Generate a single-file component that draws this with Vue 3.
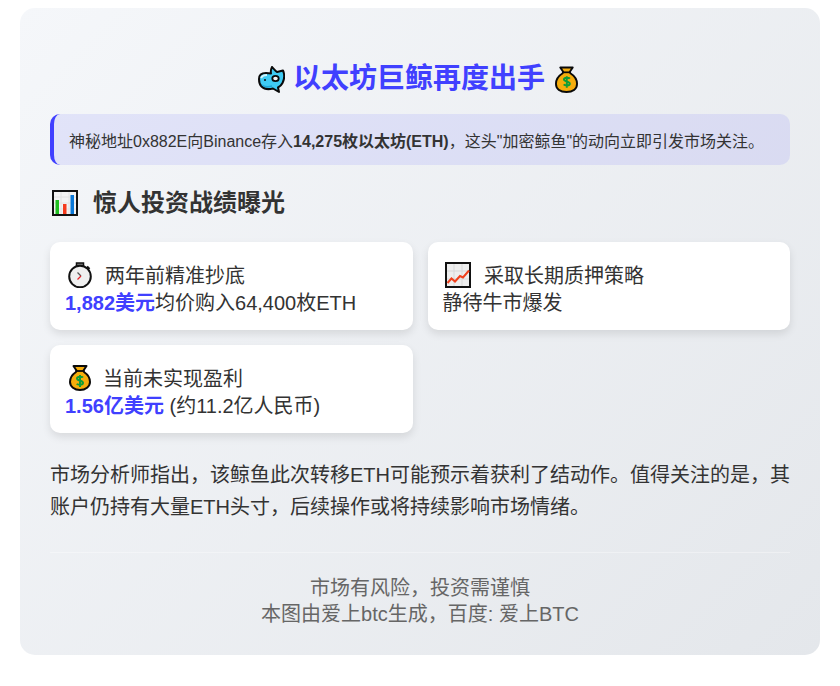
<script setup>
</script>

<template>
  <main class="page">
    <article class="panel">
      <h1 class="title">
        <svg class="whale" viewBox="0 0 27 27" aria-hidden="true">
          <path d="M1 13C1 9 4 7 8 7l5 .5C12.500 5 13 3 14 1c2 2 3.500 4 5 5 2-.5 4-1 6-1.500 1.500 3.500 1.500 8.500-.5 12.500-1 2-2.500 3.500-4.500 4.500l1 4.500-6-3.500c-4 1-9 .5-11.500-2C1.500 18.500 1 16 1 13z" fill="#3fcbf3" stroke="#0a0a0a" stroke-width="2" stroke-linejoin="round"/>
          <path d="M3 12c1-2 3-3 6-3" fill="none" stroke="#d3f5fd" stroke-width="2"/>
          <path d="M4 19c3 2 7 2 10 1" fill="none" stroke="#1fa6d6" stroke-width="1.500"/>
          <ellipse cx="17.500" cy="12.500" rx="3.200" ry="2.700" fill="#f6f6f6" stroke="#0a0a0a" stroke-width="1.800"/>
          <circle cx="7" cy="14" r="1" fill="#0a0a0a"/>
        </svg>
        <span>以太坊巨鲸再度出手</span>
        <svg class="bag" viewBox="0 0 24 28" aria-hidden="true">
          <path d="M5.500 1.500h13l-3 4.500 .5 1.500c4 2.500 7 6.500 7 11 0 5.500-4.500 8.500-11 8.500S1 24 1 18.500c0-4.500 3-8.500 7-11L8.500 6z" fill="#f6ad0c" stroke="#0a0a0a" stroke-width="2" stroke-linejoin="round"/>
          <path d="M7.500 6.500h9" stroke="#0a0a0a" stroke-width="1.800"/>
          <path d="M15.500 13c-.8-1-6-1.500-6.200.8-.2 2.700 6.400 1.800 6.200 4.700-.2 2.400-5.300 2-6.400.7M12.300 10.500v12" fill="none" stroke="#0f9d38" stroke-width="2"/>
        </svg>
      </h1>

      <p class="alert">神秘地址0x882E向Binance存入<strong>14,275枚以太坊(ETH)</strong>，这头"加密鲸鱼"的动向立即引发市场关注。</p>

      <h2 class="heading">
        <svg class="h-ico" viewBox="0 0 26 26" aria-hidden="true">
          <rect x="1" y="1" width="24" height="24" fill="#f3f3f3" stroke="#111" stroke-width="2"/>
          <path d="M2 7h22M2 13h22M2 19h22M9 2v22M17 2v22" stroke="#e2e2e2" stroke-width="1"/>
          <rect x="3.500" y="10" width="3.500" height="14" fill="#20c020"/>
          <rect x="11" y="14" width="3.500" height="10" fill="#f53a1c"/>
          <rect x="18.500" y="5" width="3.500" height="19" fill="#0a78d8"/>
        </svg>
        <span>惊人投资战绩曝光</span>
      </h2>

      <section class="grid">
        <div class="stat">
          <svg class="s-ico" viewBox="0 0 26 26" aria-hidden="true">
            <path d="M9.500 1h7v3.500h-7z" fill="#777" stroke="#111" stroke-width="1.500"/>
            <path d="M20 4.500l2.500 2.500" stroke="#111" stroke-width="2.200"/>
            <circle cx="13" cy="14.500" r="10.800" fill="#f0f0f0" stroke="#111" stroke-width="2"/>
            <path d="M10.500 10.500l3.500 3.500" stroke="#555" stroke-width="1.200"/>
            <path d="M14 14l-3.500 3.500" stroke="#e8232a" stroke-width="1.200"/>
          </svg>
          <span class="label l-clock">两年前精准抄底</span><br>
          <strong class="hl">1,882美元</strong>均价购入64,400枚ETH
        </div>
        <div class="stat">
          <svg class="s-ico" viewBox="0 0 26 26" aria-hidden="true">
            <rect x="1" y="1" width="24" height="24" fill="#eeeeee" stroke="#111" stroke-width="2"/>
            <path d="M2 9h22M2 17h22M9 2v22M17 2v22" stroke="#d8d8d8" stroke-width="1"/>
            <path d="M2.500 21l4-4.500 3.500 3 5-5.500 3 1.500 6-7" fill="none" stroke="#f0401c" stroke-width="2"/>
          </svg>
          <span class="label l-chart">采取长期质押策略</span><br>
          静待牛市爆发
        </div>
        <div class="stat">
          <svg class="s-ico" viewBox="0 0 26 26" aria-hidden="true">
            <path d="M6.500 1h13l-3 4.500 .5 1.500c3.500 2.300 6 6 6 10 0 4.500-4.500 8-10 8S3 21.500 3 17c0-4 2.500-7.700 6-10l.5-1.500z" fill="#f6ad0c" stroke="#0a0a0a" stroke-width="2" stroke-linejoin="round"/>
            <path d="M8.500 6h9" stroke="#0a0a0a" stroke-width="1.800"/>
            <path d="M16 12.500c-.8-1-5.800-1.500-6 .8-.2 2.700 6.200 1.800 6 4.700-.2 2.400-5.300 2-6.200.7M13 10v12" fill="none" stroke="#0f9d38" stroke-width="2"/>
          </svg>
          <span class="label l-bag">当前未实现盈利</span><br>
          <strong class="hl">1.56亿美元</strong> (约11.2亿人民币)
        </div>
      </section>

      <p class="analysis">市场分析师指出，该鲸鱼此次转移ETH可能预示着获利了结动作。值得关注的是，其账户仍持有大量ETH头寸，后续操作或将持续影响市场情绪。</p>

      <footer class="foot">市场有风险，投资需谨慎<br>本图由爱上btc生成，百度: 爱上BTC</footer>
    </article>
  </main>
</template>

<style>
html, body { background: #fff; }
</style>

<style scoped>
.page {
  width: 840px;
  height: 686px;
  padding: 8px 20px 31px;
  box-sizing: border-box;
  font-family: "Liberation Sans", "Noto Sans CJK SC", sans-serif;
  color: #333;
}
.panel {
  height: 647px;
  box-sizing: border-box;
  padding: 51px 30px 0;
  border-radius: 15px;
  background: linear-gradient(135deg, #f5f7fa 0%, #e4e7eb 100%);
}
.title {
  margin: 0;
  height: 40px;
  padding-right: 4px;
  display: flex;
  justify-content: center;
  align-items: center;
  font-size: 28px;
  line-height: 40px;
  font-weight: 700;
  color: #4040ff;
}
.whale { width: 27px; height: 27px; margin-right: 8px; flex: none; }
.bag { width: 23px; height: 27px; margin-left: 10px; flex: none; }
.alert {
  margin: 15px 0 0;
  height: 51px;
  box-sizing: border-box;
  padding: 17px 15px 12px;
  border-left: 4px solid #4040ff;
  border-radius: 10px;
  background: rgba(64, 64, 255, 0.1);
  font-size: 16px;
  line-height: 22px;
}
.alert strong { font-weight: 700; }
.heading {
  margin: 20px 0 0;
  height: 36px;
  display: flex;
  align-items: center;
  font-size: 24px;
  line-height: 36px;
  font-weight: 700;
}
.h-ico { width: 26px; height: 26px; margin-left: 2px; margin-right: 15px; flex: none; }
.grid {
  margin-top: 21px;
  display: grid;
  grid-template-columns: 1fr 1fr;
  gap: 15px;
}
.stat {
  height: 88px;
  box-sizing: border-box;
  padding: 20px 15px 0;
  border-radius: 10px;
  background: #fff;
  box-shadow: 0 4px 8px rgba(0, 0, 0, 0.1);
  font-size: 20px;
  line-height: 27px;
}
.s-ico { width: 26px; height: 26px; margin-left: 2px; vertical-align: -5px; }
.l-clock { margin-left: 12px; }
.l-chart { margin-left: 13.5px; }
.l-bag { margin-left: 10px; }
.hl { color: #4040ff; font-weight: 700; }
.analysis {
  margin: 26px 0 0;
  font-size: 20px;
  line-height: 32px;
  text-align: justify;
}
.foot {
  margin-top: 29px;
  padding-top: 22px;
  border-top: 1px solid rgba(255, 255, 255, 0.35);
  text-align: center;
  font-size: 20px;
  line-height: 26px;
  color: #666;
}
</style>
